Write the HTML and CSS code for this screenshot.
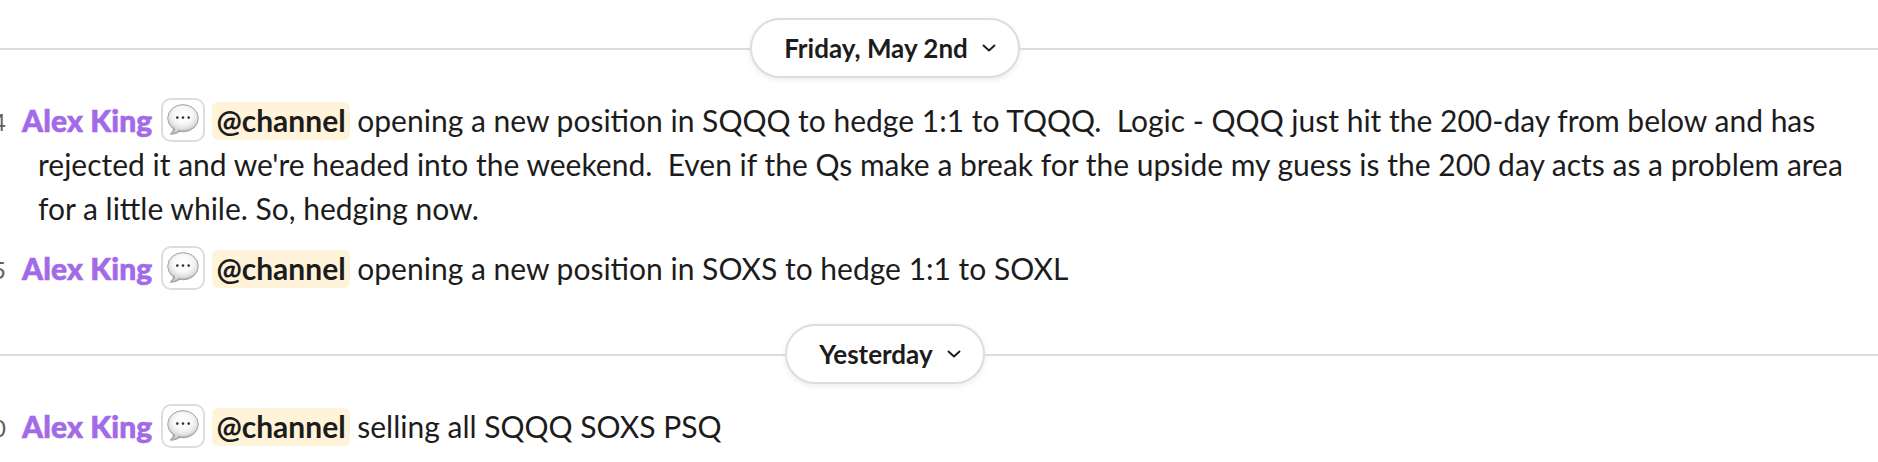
FILE: index.html
```
<!DOCTYPE html>
<html lang="en">
<head>
    <meta charset="UTF-8">
    <meta name="viewport" content="width=device-width, initial-scale=1.0">
    <title>Channel</title>
    <link rel="stylesheet" href="styles.css">
</head>
<body>
    <svg width="0" height="0" class="defs">
        <defs>
            <radialGradient id="bubble-fill" cx="50%" cy="40%" r="62%">
                <stop offset="0" stop-color="#ffffff"/>
                <stop offset="0.5" stop-color="#f8f8f8"/>
                <stop offset="0.8" stop-color="#dfdfdf"/>
                <stop offset="1" stop-color="#9c9c9c"/>
            </radialGradient>
            <symbol id="bubble" viewBox="0 0 32 32">
                <path d="M7 23 Q6.5 27.5 3.2 30.2 Q10.5 30.3 14 26 Z" fill="#bdbdbd" stroke="#929292" stroke-width="0.8"/>
                <ellipse cx="16" cy="14.2" rx="15.3" ry="13.6" fill="url(#bubble-fill)" stroke="#9b9b9b" stroke-width="0.9"/>
                <path d="M7.8 22.8 L12 25.8 L8.4 28 Z" fill="#dadada"/>
                <circle cx="10.3" cy="13.6" r="1.3" fill="#333"/>
                <circle cx="16" cy="13.6" r="1.3" fill="#333"/>
                <circle cx="21.7" cy="13.6" r="1.3" fill="#333"/>
            </symbol>
            <symbol id="chevron" viewBox="0 0 14 8">
                <path d="M1.5 1.5 L7 6.5 L12.5 1.5" fill="none" stroke="#1d1c1d" stroke-width="1.9" stroke-linecap="round" stroke-linejoin="round"/>
            </symbol>
        </defs>
    </svg>

    <main class="messages">
        <div class="divider">
            <button class="date">Friday, May 2nd <svg class="chevron"><use href="#chevron"/></svg></button>
        </div>
        <div class="message">
            <span class="time">4</span>
            <p class="text"><span class="name">Alex King</span><span class="status"><svg class="bubble"><use href="#bubble"/></svg></span><span class="mention">@channel</span> opening a new position in SQQQ to hedge 1:1 to TQQQ.&nbsp; Logic - QQQ just hit the 200-day from below and has rejected it and we're headed into the weekend.&nbsp; Even if the Qs make a break for the upside my guess is the 200 day acts as a problem area for a little while. So, hedging now.</p>
        </div>
        <div class="message">
            <span class="time">5</span>
            <p class="text"><span class="name">Alex King</span><span class="status"><svg class="bubble"><use href="#bubble"/></svg></span><span class="mention">@channel</span> opening a new position in SOXS to hedge 1:1 to SOXL</p>
        </div>
        <div class="divider">
            <button class="date">Yesterday <svg class="chevron"><use href="#chevron"/></svg></button>
        </div>
        <div class="message">
            <span class="time">0</span>
            <p class="text"><span class="name">Alex King</span><span class="status"><svg class="bubble"><use href="#bubble"/></svg></span><span class="mention">@channel</span> selling all SQQQ SOXS PSQ</p>
        </div>
    </main>
</body>
</html>
```
FILE: styles.css
```
body {
    margin: 0;
    background: #fff;
    color: #1d1c1d;
    font-family: Lato, sans-serif;
    font-size: 30px;
    line-height: 44px;
    overflow: hidden;
}
.defs {
    display: block;
}
.messages {
    padding-top: 18px;
}
.divider {
    display: flex;
    align-items: center;
    margin-left: -108px;
    margin-bottom: 12px;
}
.divider::before,
.divider::after {
    content: "";
    flex: 1;
    height: 2px;
    margin-top: 2px;
    background: #dddddd;
}
.message + .divider {
    margin-top: 26px;
}
.date {
    display: flex;
    align-items: center;
    box-sizing: border-box;
    height: 60px;
    padding: 0 22px 0 32px;
    border: 2px solid #dddddd;
    border-radius: 30px;
    background: #fff;
    box-shadow: 0 2px 6px rgba(0, 0, 0, 0.08);
    color: #1d1c1d;
    font-family: inherit;
    font-size: 26px;
    font-weight: 700;
}
.chevron {
    width: 14px;
    height: 8px;
    margin-left: 14px;
}
.message {
    display: flex;
    padding: 8px 0;
}
.time {
    display: flex;
    justify-content: flex-end;
    width: 6px;
    height: 42px;
    margin-right: 32px;
    padding-top: 2px;
    overflow: hidden;
    color: #616061;
    font-size: 24px;
}
.text {
    flex: 1;
    margin: 0;
    padding-right: 32px;
    text-indent: -16px;
}
.name {
    color: #a36ae8;
    font-weight: 900;
    letter-spacing: 0.13px;
    -webkit-text-stroke: 0.6px #a36ae8;
}
.status {
    display: inline-flex;
    align-items: center;
    justify-content: center;
    box-sizing: border-box;
    width: 44px;
    height: 44px;
    margin: 0 7px 0 9px;
    border: 2px solid #dddddd;
    border-radius: 10px;
    vertical-align: top;
    text-indent: 0;
}
.bubble {
    width: 32px;
    height: 32px;
}
.mention {
    padding: 0 4px 2px;
    border-radius: 6px;
    background: #fff3d9;
    font-weight: 700;
}
```
